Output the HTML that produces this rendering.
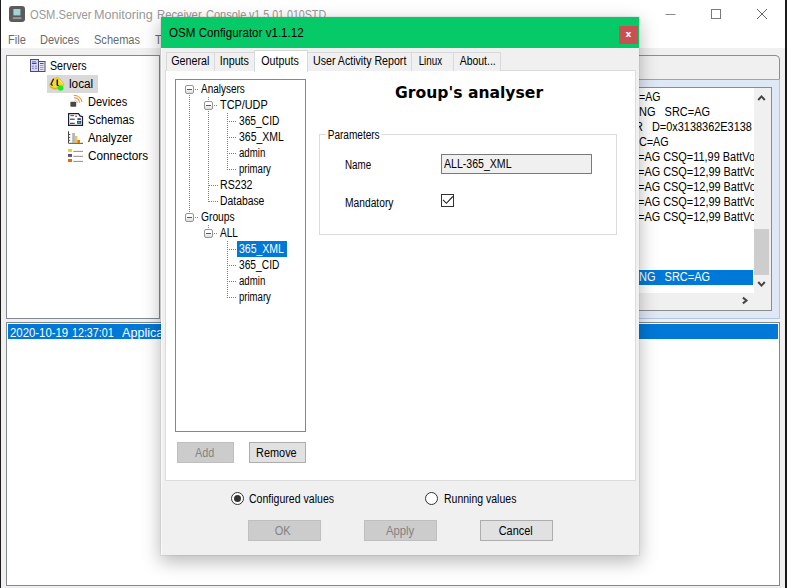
<!DOCTYPE html>
<html>
<head>
<meta charset="utf-8">
<title>OSM.Server Monitoring Receiver Console</title>
<style>
*{box-sizing:border-box;margin:0;padding:0}
html,body{width:787px;height:588px;overflow:hidden;background:#f0f0f0}
body{position:relative;font-family:"Liberation Sans",sans-serif;font-size:12px;color:#000}
.abs{position:absolute}
.t{position:absolute;white-space:nowrap;line-height:16px;transform-origin:0 50%}
/* main window */
#edgeL{left:0;top:0;width:1.2px;height:588px;background:#1e1e1e}
#edgeR{left:785px;top:0;width:2px;height:588px;background:#1a1a1a}
#titlebar{left:0;top:0;width:787px;height:48px;background:#fff}
.wt{top:7px;font-size:12px;color:#999}
.menu{top:32px;color:#6a6a6a;font-size:12px;transform:scaleX(.92)}
.box{position:absolute;background:#fff;border:1px solid #828790}
.mt{font-size:12px;line-height:18px}
.sel{background:#0078d7;color:#fff}
/* dialog */
#dlg{left:161px;top:17px;width:478px;height:538px;background:#f0f0f0;box-shadow:0 6px 17px 1px rgba(0,0,0,.27),0 0 0 1px rgba(0,0,0,.05)}
#dtitle{left:0;top:0;width:478px;height:31px;background:#06c967}
#dlg .t{font-size:12px;line-height:14px}
.tab{position:absolute;top:35px;height:19px;border:1px solid #d9d9d9;border-bottom:none;background:#f0f0f0;font-size:12px;line-height:16px;text-align:center;white-space:nowrap}
.tab.on{top:33px;height:22px;background:#fff;border-color:#d9d9d9;line-height:20px;z-index:2}
.btn{position:absolute;height:21px;border:1px solid #adadad;background:#e1e1e1;font-size:12px;line-height:20px;text-align:center}
.btn.dis{background:#cccccc;border-color:#bfbfbf;color:#838383}
.dot-h{position:absolute;height:1px;background-image:linear-gradient(to right,#808080 50%,transparent 50%);background-size:2px 1px}
.dot-v{position:absolute;width:1px;background-image:linear-gradient(to bottom,#808080 50%,transparent 50%);background-size:1px 2px}
.pm{position:absolute;width:9px;height:9px;border:1px solid #969696;border-radius:2px;background:linear-gradient(#fff 35%,#d9dce4)}
.pm:after{content:"";position:absolute;left:1px;top:3px;width:5px;height:1px;background:#44559c}
.tab span,.btn span{display:inline-block}
.radio{position:absolute;width:13px;height:13px;border:1px solid #333;border-radius:50%;background:#fff}
</style>
</head>
<body>
<!-- ===== main window ===== -->
<div class="abs" id="titlebar"></div>
<div class="abs" id="edgeL"></div>
<div class="abs" id="edgeR"></div>

<svg class="abs" style="left:9px;top:6px" width="16" height="16" viewBox="0 0 16 16">
  <rect x="0" y="0" width="16" height="16" rx="3" fill="#5b5b5b"/>
  <rect x="4.400" y="3" width="7" height="6.400" fill="#9fd6d4"/>
  <rect x="3.800" y="11.200" width="8.600" height="1.900" fill="#9a9a9a"/>
</svg>
<div class="t wt" style="left:30px;transform:scaleX(.93)">OSM.Server</div>
<div class="t wt" style="left:94.400px;transform:scaleX(1.05)">Monitoring</div>
<div class="t wt" style="left:157.200px;transform:scaleX(.943)">Receiver</div>
<div class="t wt" style="left:205.500px;transform:scaleX(.915)">Console</div>
<div class="t wt" style="left:249.200px;transform:scaleX(.889)">v1.5.01.010STD</div>
<div class="t menu" style="left:8px">File</div>
<div class="t menu" style="left:40px">Devices</div>
<div class="t menu" style="left:94px">Schemas</div>
<div class="t menu" style="left:155px">T</div>

<!-- window buttons -->
<svg class="abs" style="left:650px;top:0" width="135" height="30" viewBox="0 0 135 30">
  <path d="M15.5 14.5h10" stroke="#8a8a8a" stroke-width="1" fill="none"/>
  <rect x="61.5" y="9.5" width="9" height="9" stroke="#7a7a7a" stroke-width="1" fill="none"/>
  <path d="M107 9l10 10M117 9l-10 10" stroke="#666" stroke-width="1" fill="none"/>
</svg>

<!-- left tree -->
<div class="box" style="left:6px;top:55px;width:154px;height:264px"></div>
<div class="abs" style="left:47px;top:75px;width:51px;height:18px;background:#d9d9d9"></div>
<div class="t mt" style="left:50px;top:57px;transform:scaleX(0.885)">Servers</div>
<div class="t mt" style="left:69px;top:75px;transform:scaleX(0.98)">local</div>
<div class="t mt" style="left:88px;top:93px;transform:scaleX(0.92)">Devices</div>
<div class="t mt" style="left:88px;top:111px;transform:scaleX(0.926)">Schemas</div>
<div class="t mt" style="left:88px;top:129px;transform:scaleX(0.946)">Analyzer</div>
<div class="t mt" style="left:88px;top:147px;transform:scaleX(0.98)">Connectors</div>

<!-- tree icons -->
<svg class="abs" style="left:30px;top:59px" width="16" height="13" viewBox="0 0 16 13">
  <rect x="0.500" y="0.500" width="8" height="12" fill="#d6d6fb" stroke="#4c4c6a"/>
  <rect x="8.500" y="2.500" width="6.500" height="10" fill="#e6e6f4" stroke="#4c4c6a"/>
  <path d="M2 2.500h4" stroke="#8c8ce0" stroke-width="1"/>
  <path d="M2 4.300h4.500" stroke="#3434a0" stroke-width="1.200"/>
  <path d="M2 7.200h2M5 7.200h2M2 9.300h2M5 9.300h2" stroke="#7a7ae0" stroke-width="1"/>
  <path d="M10 4.500h3.500" stroke="#555" stroke-width="1"/>
  <path d="M10 6.500h3.500M10 8.500h3.500M10 10.500h3.500" stroke="#9a9aa8" stroke-width="1"/>
</svg>
<svg class="abs" style="left:49px;top:77px" width="16" height="14" viewBox="0 0 16 14">
  <path d="M7.400 0.600 L9.400 0.800 L12 2.900 L14.800 6.800 L13.500 10 L9.300 11.600 L5.400 12.400 L1.600 10.500 L0.300 8.100 L3.500 2.400 Z" fill="#f4d83a" stroke="#c9aa22" stroke-width="0.500"/>
  <path d="M4.600 1.700 L2 7.300 L3.600 8.600" stroke="#2c2808" stroke-width="1.300" fill="none"/>
  <path d="M8.300 2.400 L8.300 8 L9.600 9" stroke="#1e1a04" stroke-width="1.500" fill="none"/>
  <path d="M1.600 9.800 L5.400 11.600 L9 10.900" stroke="#c8a81e" stroke-width="0.900" fill="none"/>
  <path d="M10.500 3 L13.500 6.800" stroke="#fff2a0" stroke-width="0.900" fill="none"/>
  <circle cx="11.600" cy="11" r="2.800" fill="#1fea20"/>
</svg>
<svg class="abs" style="left:68px;top:94px" width="16" height="14" viewBox="0 0 16 14">
  <rect x="2.400" y="7.800" width="5.800" height="5" rx="0.800" fill="#474747"/>
  <path d="M6.700 5.900 A3.800 3.800 0 0 1 9.600 9" stroke="#f3b47c" stroke-width="1" fill="none"/>
  <path d="M6.200 3.600 A6.100 6.100 0 0 1 11.700 8.600" stroke="#ee9a52" stroke-width="1.100" fill="none"/>
  <path d="M5.800 1.300 A8.500 8.500 0 0 1 14 8" stroke="#e98a3c" stroke-width="1.100" fill="none"/>
</svg>
<svg class="abs" style="left:68px;top:113px" width="16" height="13" viewBox="0 0 16 13">
  <path d="M0.600 0.600h10l1.300 2.300 2.600 0.700v8.800h-13.900z" fill="#fff" stroke="#1c1c3a" stroke-width="1.200"/>
  <path d="M2.400 2.600h3.600" stroke="#9a3a3a" stroke-width="1.100"/>
  <path d="M7.300 3.200h1.600" stroke="#1c1c3a" stroke-width="1"/>
  <path d="M2 6.200h4.700M2 10.300h4.700" stroke="#1c1c3a" stroke-width="1"/>
  <rect x="9.400" y="5.300" width="3.500" height="1.500" fill="#1c2050"/>
  <rect x="9.400" y="8.200" width="3.500" height="2.100" fill="#3a9ab8" stroke="#1c1c3a" stroke-width="0.600"/>
</svg>
<svg class="abs" style="left:68px;top:131px" width="16" height="13" viewBox="0 0 16 13">
  <path d="M0.500 0.200v12.100h14.500" stroke="#4a4a4a" stroke-width="1" fill="none"/>
  <path d="M1 3.500h1.200M1 6.400h1.200M1 9.300h1.200" stroke="#4a4a4a" stroke-width="1"/>
  <rect x="4.200" y="2" width="2.700" height="10" fill="#b4b4b4"/>
  <rect x="6.900" y="5" width="2.500" height="7" fill="#ecc452"/>
  <rect x="9.300" y="9" width="2.700" height="3" fill="#ea7410"/>
</svg>
<svg class="abs" style="left:68px;top:149px" width="16" height="13" viewBox="0 0 16 13">
  <rect x="0" y="0" width="4" height="2.900" fill="#f0cc28"/>
  <rect x="0" y="5" width="4" height="2.900" fill="#5a5664"/>
  <rect x="0" y="10" width="4" height="3" fill="#ea6a10"/>
  <path d="M5.300 2.400h9.700M5.300 7.300h9.700M5.300 12.400h9.700" stroke="#808080" stroke-width="0.900"/>
</svg>

<!-- right panel -->
<div class="abs" style="left:600px;top:55px;width:180px;height:26px;border:1px solid #8e8e8e;border-bottom:none;border-radius:0 5px 0 0;background:#f0f0f0"></div>
<div class="abs" style="left:600px;top:79px;width:180px;height:240px;background:#dfe9f6;border:1px solid #b3c7e1;border-top:1px solid #a3a3a3"></div>
<div class="box" style="left:600px;top:87px;width:172px;height:224px;border-color:#8c8c8c"></div>
<div class="abs" style="left:601px;top:89px;width:153px;height:204px;overflow:hidden">
<div class="t mt" style="left:38px;top:1px;line-height:15px;transform:scaleX(0.88)">=AG</div>
<div class="t mt" style="left:38px;top:16px;line-height:15px;transform:scaleX(0.915)">NG&nbsp;&nbsp; SRC=AG</div>
<div class="t mt" style="left:34px;top:31px;line-height:15px;transform:scaleX(0.91)">R&nbsp;&nbsp; D=0x3138362E3138</div>
<div class="t mt" style="left:38px;top:46px;line-height:15px;transform:scaleX(0.9)">C=AG</div>
<div class="t mt" style="left:37px;top:61px;line-height:15px;transform:scaleX(0.91)">=AG CSQ=11,99 BattVo</div>
<div class="t mt" style="left:37px;top:76px;line-height:15px;transform:scaleX(0.91)">=AG CSQ=12,99 BattVo</div>
<div class="t mt" style="left:37px;top:91px;line-height:15px;transform:scaleX(0.91)">=AG CSQ=12,99 BattVo</div>
<div class="t mt" style="left:37px;top:106px;line-height:15px;transform:scaleX(0.91)">=AG CSQ=12,99 BattVo</div>
<div class="t mt" style="left:37px;top:121px;line-height:15px;transform:scaleX(0.91)">=AG CSQ=12,99 BattVo</div>
<div class="abs sel" style="left:-1px;top:181px;width:153px;height:15px"></div>
<div class="t mt" style="left:38px;top:181px;line-height:15px;color:#fff;transform:scaleX(0.915)">NG&nbsp;&nbsp; SRC=AG</div>
</div>
<!-- scrollbars -->
<div class="abs" style="left:754px;top:88px;width:17px;height:205px;background:#f0f0f0"></div>
<div class="abs" style="left:754px;top:229px;width:15px;height:46px;background:#cdcdcd"></div>
<div class="abs" style="left:601px;top:293px;width:170px;height:17px;background:#f0f0f0"></div>
<svg class="abs" style="left:754px;top:88px" width="17" height="205" viewBox="0 0 17 205">
  <path d="M4.200 12l3.300-3.600 3.300 3.600" stroke="#454545" stroke-width="2" fill="none"/>
  <path d="M4.200 194l3.300 3.600 3.300-3.600" stroke="#454545" stroke-width="2" fill="none"/>
</svg>
<svg class="abs" style="left:737px;top:293px" width="17" height="17" viewBox="0 0 17 17">
  <path d="M5.900 4.600l3.600 2.900-3.600 2.900" stroke="#454545" stroke-width="2" fill="none"/>
</svg>

<!-- bottom list -->
<div class="box" style="left:6px;top:322px;width:774px;height:264px"></div>
<div class="abs sel" style="left:8px;top:324px;width:770px;height:15px"></div>
<div class="abs" style="left:8px;top:324px;width:771px;height:18px;overflow:hidden">
<div class="t mt" style="left:2px;top:2px;line-height:15px;color:#fff;transform:scaleX(0.948)">2020-10-19</div>
<div class="t mt" style="left:64px;top:2px;line-height:15px;color:#fff;transform:scaleX(0.89)">12:37:01</div>
<div class="t mt" style="left:114px;top:2px;line-height:15px;color:#fff;transform:scaleX(1.05)">Application</div>
</div>

<!-- ===== dialog ===== -->
<div class="abs" id="dlg">
  <div class="abs" id="dtitle"></div>
  <div class="abs" style="left:0;top:31px;width:1px;height:507px;background:#f9f9f9"></div>
  <div class="t" style="left:8px;top:8px;font-size:12px;line-height:16px;transform:scaleX(0.966)">OSM Configurator v1.1.12</div>
  <div class="abs" style="left:458px;top:8.5px;width:19px;height:18px;background:#c94f52;color:#fff;font-family:'DejaVu Sans','Liberation Sans',sans-serif;font-size:9px;font-weight:bold;line-height:17px;text-align:center">x</div>

  <!-- tab page -->
  <div class="abs" style="left:4px;top:53px;width:471px;height:411px;background:#fff;border:1px solid #dcdcdc"></div>
  <div class="tab" style="left:5px;width:49px"><span style="transform:scaleX(0.893);position:relative;left:-0.5px">General</span></div>
  <div class="tab" style="left:53px;width:41px"><span style="transform:scaleX(0.894);position:relative;left:-0.3px">Inputs</span></div>
  <div class="tab on" style="left:93px;width:54px"><span style="transform:scaleX(0.891);position:relative;left:-0.5px">Outputs</span></div>
  <div class="tab" style="left:146px;width:105px"><span style="transform:scaleX(0.886);position:relative;left:-1px">User Activity Report</span></div>
  <div class="tab" style="left:250px;width:43px"><span style="transform:scaleX(0.816);position:relative;left:-2px">Linux</span></div>
  <div class="tab" style="left:292px;width:48px"><span style="transform:scaleX(0.871);position:relative;left:1px">About...</span></div>

  <!-- tree -->
  <div class="box" style="left:14px;top:62px;width:131px;height:353px"></div>
  <div class="dot-v" style="left:28px;top:78px;height:118px"></div>
  <div class="dot-v" style="left:47px;top:80px;height:4px"></div>
  <div class="dot-v" style="left:47px;top:94px;height:91px"></div>
  <div class="dot-v" style="left:66px;top:96px;height:57px"></div>
  <div class="dot-v" style="left:47px;top:208px;height:4px"></div>
  <div class="dot-v" style="left:66px;top:224px;height:57px"></div>
  <div class="dot-h" style="left:34px;top:72px;width:4px"></div>
  <div class="dot-h" style="left:53px;top:88px;width:4px"></div>
  <div class="dot-h" style="left:66px;top:104px;width:10px"></div>
  <div class="dot-h" style="left:66px;top:120px;width:10px"></div>
  <div class="dot-h" style="left:66px;top:136px;width:10px"></div>
  <div class="dot-h" style="left:66px;top:152px;width:10px"></div>
  <div class="dot-h" style="left:48px;top:168px;width:9px"></div>
  <div class="dot-h" style="left:48px;top:184px;width:9px"></div>
  <div class="dot-h" style="left:34px;top:200px;width:4px"></div>
  <div class="dot-h" style="left:53px;top:216px;width:4px"></div>
  <div class="dot-h" style="left:66px;top:232px;width:10px"></div>
  <div class="dot-h" style="left:66px;top:248px;width:10px"></div>
  <div class="dot-h" style="left:66px;top:264px;width:10px"></div>
  <div class="dot-h" style="left:66px;top:280px;width:10px"></div>
  <div class="pm" style="left:24px;top:68px"></div>
  <div class="pm" style="left:43px;top:84px"></div>
  <div class="pm" style="left:24px;top:196px"></div>
  <div class="pm" style="left:43px;top:212px"></div>
  <div class="abs sel" style="left:76px;top:224px;width:50px;height:16px"></div>
  <div class="t" style="left:40px;top:65px;transform:scaleX(0.830)">Analysers</div>
  <div class="t" style="left:59px;top:81px;transform:scaleX(0.906)">TCP/UDP</div>
  <div class="t" style="left:78px;top:97px;transform:scaleX(0.852)">365_CID</div>
  <div class="t" style="left:78px;top:113px;transform:scaleX(0.874)">365_XML</div>
  <div class="t" style="left:78px;top:129px;transform:scaleX(0.804)">admin</div>
  <div class="t" style="left:78px;top:145px;transform:scaleX(0.796)">primary</div>
  <div class="t" style="left:59px;top:161px;transform:scaleX(0.884)">RS232</div>
  <div class="t" style="left:59px;top:177px;transform:scaleX(0.864)">Database</div>
  <div class="t" style="left:40px;top:193px;transform:scaleX(0.856)">Groups</div>
  <div class="t" style="left:59px;top:209px;transform:scaleX(0.837)">ALL</div>
  <div class="t" style="left:78px;top:225px;color:#fff;transform:scaleX(0.874)">365_XML</div>
  <div class="t" style="left:78px;top:241px;transform:scaleX(0.852)">365_CID</div>
  <div class="t" style="left:78px;top:257px;transform:scaleX(0.804)">admin</div>
  <div class="t" style="left:78px;top:273px;transform:scaleX(0.796)">primary</div>

  <div class="btn dis" style="left:16px;top:425px;width:57px"><span style="transform:scaleX(0.901);position:relative;left:-1px">Add</span></div>
  <div class="btn" style="left:88px;top:425px;width:57px"><span style="transform:scaleX(0.909);position:relative;left:-1px">Remove</span></div>

  <!-- right side -->
  <div class="t" style="left:234px;top:65.5px;font-family:'DejaVu Sans','Liberation Sans',sans-serif;font-weight:bold;font-size:16px;line-height:20px;transform:scaleX(0.974)">Group's analyser</div>
  <div class="abs" style="left:158px;top:117px;width:298px;height:101px;border:1px solid #dcdcdc"></div>
  <div class="t" style="left:165px;top:111px;background:#fff;padding:0 2px;transform:scaleX(0.838)">Parameters</div>
  <div class="t" style="left:184px;top:141px;transform:scaleX(0.817)">Name</div>
  <div class="abs" style="left:280px;top:137px;width:151px;height:20px;border:1px solid #7a7a7a;background:#f0f0f0"></div>
  <div class="t" style="left:283px;top:140px;transform:scaleX(0.880)">ALL-365_XML</div>
  <div class="t" style="left:184px;top:179px;transform:scaleX(0.854)">Mandatory</div>
  <div class="abs" style="left:280px;top:177px;width:13px;height:13px;border:1px solid #333;background:#fff"></div>
  <svg class="abs" style="left:280px;top:177px" width="13" height="13" viewBox="0 0 13 13"><path d="M2 5.900l3.400 3.400 6.400-6.800" stroke="#222" stroke-width="1.100" fill="none"/></svg>

  <!-- bottom -->
  <div class="radio" style="left:70px;top:475px"></div>
  <div class="abs" style="left:73px;top:478px;width:7px;height:7px;border-radius:50%;background:#333"></div>
  <div class="t" style="left:88px;top:475px;transform:scaleX(0.879)">Configured values</div>
  <div class="radio" style="left:264px;top:475px"></div>
  <div class="t" style="left:283px;top:475px;transform:scaleX(0.875)">Running values</div>
  <div class="btn dis" style="left:87px;top:503px;width:73px"><span style="transform:scaleX(0.917);position:relative;left:-1.5px">OK</span></div>
  <div class="btn dis" style="left:203px;top:503px;width:73px"><span style="transform:scaleX(0.941);position:relative;left:-0.8px">Apply</span></div>
  <div class="btn" style="left:319px;top:503px;width:73px"><span style="transform:scaleX(0.907);position:relative;left:-1px">Cancel</span></div>
</div>
</body>
</html>
